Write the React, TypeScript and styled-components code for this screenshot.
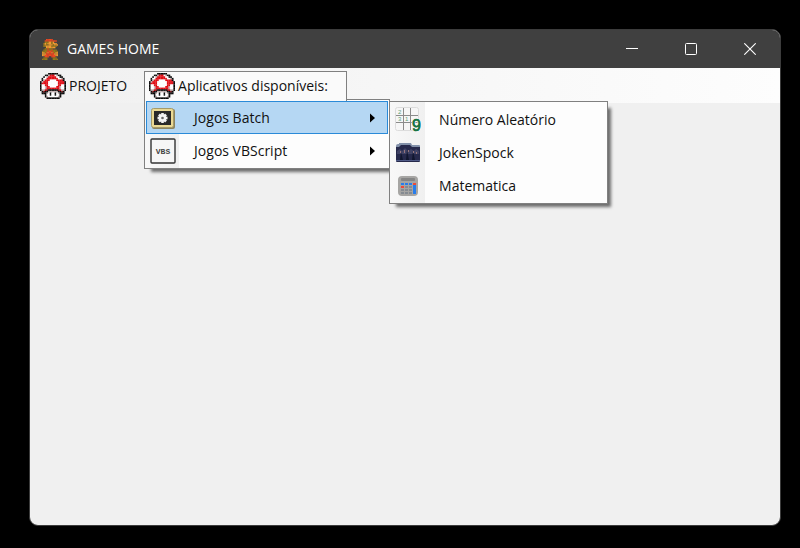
import React from 'react';
import styled, { createGlobalStyle } from 'styled-components';

const GlobalStyle = createGlobalStyle`
  * { box-sizing: border-box; }
  body {
    margin: 0;
    background: #000;
    color: #111;
    font-family: "Open Sans", "Noto Sans", sans-serif;
    font-size: 14px;
    line-height: 20px;
  }
  button { font: inherit; color: inherit; border: 0; margin: 0; padding: 0; background: none; }
`;

const Desktop = styled.div`
  display: flex;
  min-height: 100vh;
  padding: 29px 19px 22px 29px;
`;

const AppWindow = styled.section`
  flex: 1;
  display: flex;
  flex-direction: column;
  background: #f0f0f0;
  border: 1px solid #3c3c3c;
  border-radius: 9px;
`;

const TitleBar = styled.header`
  display: flex;
  align-items: center;
  height: 38px;
  padding: 0 1px 0 12px;
  background: #404040;
  border-radius: 8px 8px 0 0;
  color: #fff;
`;

const Title = styled.h1`
  flex: 1;
  margin: 0 0 0 9px;
  font-size: 14px;
  line-height: 20px;
  font-weight: 400;
`;

const WindowButton = styled.button`
  display: flex;
  align-items: center;
  justify-content: center;
  width: 59px;
  height: 38px;
`;

const MenuStrip = styled.nav`
  display: flex;
  height: 35px;
  padding: 3px 5px 0;
  gap: 11px;
  background: linear-gradient(90deg, #f0f0f0, #fdfdfd);
`;

const MenuEntry = styled.div`
  position: relative;
`;

const MenuButton = styled.button<{ $open?: boolean }>`
  position: relative;
  z-index: ${p => (p.$open ? 2 : 0)};
  display: flex;
  align-items: center;
  gap: 3px;
  height: 30px;
  padding: 0 ${p => (p.$open ? 18 : 5)}px 2px 4px;
  border: 1px solid ${p => (p.$open ? '#808080' : 'transparent')};
  border-bottom: 0;
  background: ${p => (p.$open ? '#fafafa' : 'transparent')};
  white-space: nowrap;
`;

const Popup = styled.div<{ $nested?: boolean }>`
  position: absolute;
  z-index: ${p => (p.$nested ? 3 : 1)};
  top: ${p => (p.$nested ? '0' : 'calc(100% - 4px)')};
  left: ${p => (p.$nested ? 'calc(100% + 1px)' : '0')};
  width: ${p => (p.$nested ? 219 : 246)}px;
  padding: 1px;
  border: 1px solid #808080;
  background: linear-gradient(90deg, #f8f8f8, #f0f0f0 ${p => (p.$nested ? 35 : 34)}px, #fdfdfd ${p => (p.$nested ? 35 : 34)}px);
  box-shadow: 5px 5px 3px -2px rgba(0, 0, 0, 0.55);
`;

const PopupRow = styled.div`
  position: relative;
`;

const PopupItem = styled.button<{ $selected?: boolean }>`
  display: grid;
  grid-template-columns: 26px 1fr 8px;
  align-items: center;
  column-gap: 18px;
  width: 100%;
  height: 33px;
  padding: 0 10px 0 3px;
  border: 1px solid ${p => (p.$selected ? '#2a8ad8' : 'transparent')};
  background: ${p => (p.$selected ? '#b5d7f3' : 'transparent')};
  text-align: left;
  white-space: nowrap;
`;

const Client = styled.main`
  flex: 1;
`;

const MARIO = [
  '...RRRRR....',
  '..RRRRRRRRR.',
  '..BBBSSBS...',
  '.BSBSSSBSSS.',
  '.BSBBSSSBSSS',
  '.BBSSSSBBBB.',
  '...SSSSSSS..',
  '..BBRBBB....',
  '.BBBRBBRBBB.',
  'BBBBRRRRBBBB',
  'SSBRSRRSRBSS',
  'SSSRRRRRRSSS',
  'SSRRRRRRRRSS',
  '..RRR..RRR..',
  '.BBB....BBB.',
  'BBBB....BBBB',
];

const MUSHROOM = [
  '.....KKKKKK.....',
  '...KKGRRRWGKK...',
  '..KWGRRRRRWWKK..',
  '.KWWRRRRRRRWWGK.',
  '.KGRRRWWWWRRRRK.',
  'KGRRRWWWWWWRRRRK',
  'KRRRRWWWWWWRRRRK',
  'KWWRRWWWWWWRRWWK',
  'KWWGRRWWWWRRGWWK',
  'KWWGRRRRRRRRGWWK',
  'KGGRDKKKKKKDRGGK',
  '.KDKKGGGGGGKKDK.',
  '.KKKGWKWWKWGKKK.',
  '...KWWKWWKWWK...',
  '...KGWWWWWWGK...',
  '....KKKKKKKK....',
];

const COLORS: Record<string, string> = {
  R: '#e00c14', B: '#96781a', S: '#f09a30', K: '#0a0a0a', W: '#fff', G: '#c4b4b4', D: '#7c1014',
};

function Sprite({ rows, width, height, red = COLORS.R }: { rows: string[]; width: number; height: number; red?: string }) {
  return (
    <svg width={width} height={height} viewBox={`0 0 ${rows[0].length} ${rows.length}`} preserveAspectRatio="none" aria-hidden="true">
      {rows.flatMap((row, y) =>
        [...row].map((c, x) =>
          c === '.' ? null : (
            <rect key={`${x}-${y}`} x={x} y={y} width="1.1" height="1.1" fill={c === 'R' ? red : COLORS[c]} />
          ),
        ),
      )}
    </svg>
  );
}

const Mushroom = () => <Sprite rows={MUSHROOM} width={26} height={26} />;

const BatchIcon = () => (
  <svg width="26" height="26" viewBox="0 0 26 26" aria-hidden="true">
    <rect x="2" y="4" width="23" height="20" rx="2" fill="#8b8460" />
    <rect x="1.5" y="3.5" width="22" height="19" rx="2" fill="#ead994" stroke="#a69a69" />
    <rect x="4" y="6" width="17" height="14" fill="#292929" />
    <g transform="translate(12.5 13)" fill="#f4f4f4">
      {[0, 45, 90, 135].map(a => <rect key={a} x="-1.3" y="-5" width="2.6" height="10" transform={`rotate(${a})`} />)}
      <circle r="3.8" />
      <circle r="1.3" fill="#666" />
    </g>
  </svg>
);

const VbsIcon = () => (
  <svg width="26" height="26" viewBox="0 0 26 26" aria-hidden="true">
    <rect x="1" y="1" width="24" height="24" rx="1" fill="#f6f6f6" stroke="#333" strokeWidth="1.4" />
    <text x="13" y="16" textAnchor="middle" fontFamily="Liberation Mono, monospace" fontWeight="700" fontSize="8" fill="#444">VBS</text>
  </svg>
);

const NumberIcon = () => (
  <svg width="26" height="26" viewBox="0 0 26 26" aria-hidden="true">
    <rect x="0.5" y="0.5" width="23" height="23" rx="2" fill="#f6f6f6" stroke="#dcdcdc" />
    <path d="M8.5 1v22M15.5 1v22M1 8.5h22M1 15.5h22" stroke="#8b8b8b" />
    <g fontFamily="Liberation Sans, sans-serif" fill="#5da17a">
      <text x="3" y="7" fontSize="6">2</text>
      <text x="3" y="14" fontSize="6">3</text>
      <text x="10" y="14" fontSize="6">1</text>
      <text x="17" y="24" fontSize="16" fontWeight="400" fill="#187442" stroke="#f3f3f3" strokeWidth="2" paintOrder="stroke">9</text>
      <text x="17" y="24" fontSize="16" fill="#187442" stroke="#187442" strokeWidth="0.5">9</text>
    </g>
  </svg>
);

const FolderIcon = () => (
  <svg width="26" height="26" viewBox="0 0 26 26" aria-hidden="true">
    <path d="M1 6q0-2 2-2h1V3h12l1 2h7q1 0 1 1v5H1z" fill="#8290a9" />
    <path d="M1 7h3l2-2h9l2 2h8v14q0 1-1 1H2q-1 0-1-1z" fill="#26294b" />
    <path d="M2 11l3-2 2 2 3-3 3 3 3-2 3 2 2-2 3 2v3H2z" fill="#404264" />
    <path d="M5 20l1-8 2 8zM11 20l1-10 2 10zM17 20l1-9 2 9z" fill="#11162e" />
    <path d="M5 11h1v2H5zM9 10h1v3H9zM13 10h1v2h-1zM18 11h1v2h-1zM21 12h1v2h-1z" fill="#94747b" />
    <path d="M1 20h24v1H1z" fill="#505b87" />
  </svg>
);

const CalculatorIcon = () => (
  <svg width="26" height="26" viewBox="0 0 26 26" aria-hidden="true">
    <rect x="3" y="3" width="20" height="20" rx="4" fill="#a6a5a3" />
    <rect x="6" y="5" width="14" height="3" rx="1" fill="#858585" />
    {[6, 10, 14, 18].map((x, i) => [10, 13, 16, 19].map((y, j) => (
      <rect key={`${x}-${y}`} x={x} y={y} width="3" height="2"
        fill={(i === 0 && j === 1) || (i === 3 && j === 0) ? '#ef493a' : i === 3 || j === 0 ? '#287dec' : '#858b92'} />
    )))}
    <path d="M18 12h3v9h-3z" fill="#287dec" />
  </svg>
);

const Arrow = () => (
  <svg width="8" height="10" viewBox="0 0 8 10" aria-hidden="true">
    <path d="M1 0.5v9l5-4.5z" fill="#000" />
  </svg>
);

const GAMES = [
  { label: 'Número Aleatório', Icon: NumberIcon },
  { label: 'JokenSpock', Icon: FolderIcon },
  { label: 'Matematica', Icon: CalculatorIcon },
];

export default function App() {
  return (
    <>
      <GlobalStyle />
      <Desktop>
        <AppWindow>
          <TitleBar>
            <Sprite rows={MARIO} width={16} height={21} red="#f04820" />
            <Title>GAMES HOME</Title>
            <WindowButton aria-label="Minimizar">
              <svg width="12" height="12" viewBox="0 0 12 12"><path d="M0 5.5h12" stroke="#fff" /></svg>
            </WindowButton>
            <WindowButton aria-label="Maximizar">
              <svg width="12" height="12" viewBox="0 0 12 12"><rect x="0.5" y="0.5" width="11" height="11" rx="1" fill="none" stroke="#fff" /></svg>
            </WindowButton>
            <WindowButton aria-label="Fechar">
              <svg width="12" height="12" viewBox="0 0 12 12"><path d="M0.3 0.3l11.4 11.4M11.7 0.3L0.3 11.7" stroke="#fff" strokeWidth="1.1" /></svg>
            </WindowButton>
          </TitleBar>
          <MenuStrip>
            <MenuEntry>
              <MenuButton><Mushroom />PROJETO</MenuButton>
            </MenuEntry>
            <MenuEntry>
              <MenuButton $open aria-haspopup="menu" aria-expanded="true"><Mushroom />Aplicativos disponíveis:</MenuButton>
              <Popup role="menu">
                <PopupRow>
                  <PopupItem $selected role="menuitem" aria-haspopup="menu" aria-expanded="true">
                    <BatchIcon />Jogos Batch<Arrow />
                  </PopupItem>
                  <Popup $nested role="menu">
                    {GAMES.map(({ label, Icon }) => (
                      <PopupItem key={label} role="menuitem"><Icon />{label}</PopupItem>
                    ))}
                  </Popup>
                </PopupRow>
                <PopupItem role="menuitem" aria-haspopup="menu">
                  <VbsIcon />Jogos VBScript<Arrow />
                </PopupItem>
              </Popup>
            </MenuEntry>
          </MenuStrip>
          <Client />
        </AppWindow>
      </Desktop>
    </>
  );
}
